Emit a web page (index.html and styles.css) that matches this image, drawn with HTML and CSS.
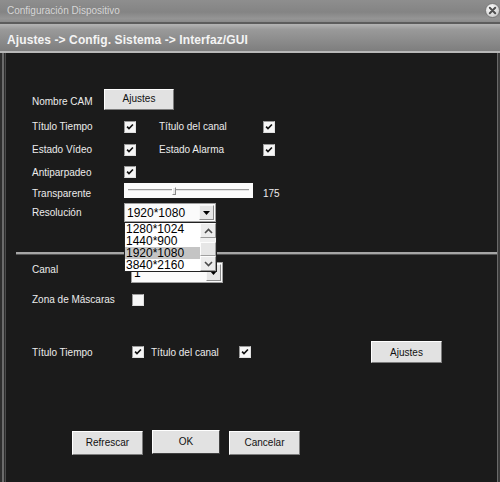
FILE: index.html
```html
<!DOCTYPE html>
<html>
<head>
<meta charset="utf-8">
<link rel="stylesheet" href="styles.css">
</head>
<body>
<div class="window">
  <div class="titlebar">
    <span class="title">Configuración Dispositivo</span>
    <svg class="close" width="15" height="15" viewBox="0 0 15 15">
      <defs>
        <radialGradient id="cg" cx="0.4" cy="0.35" r="0.7">
          <stop offset="0" stop-color="#ffffff"/>
          <stop offset="1" stop-color="#c8c8c8"/>
        </radialGradient>
      </defs>
      <circle cx="7.5" cy="7.5" r="7" fill="url(#cg)" stroke="#6a6a6a" stroke-width="0.8"/>
      <path d="M4.8 4.8 L10.2 10.2 M10.2 4.8 L4.8 10.2" stroke="#505050" stroke-width="2" stroke-linecap="round"/>
    </svg>
  </div>
  <div class="header">Ajustes -&gt; Config. Sistema -&gt; Interfaz/GUI</div>
  <div class="content">
    <section class="sec1">
      <div class="row r1">
        <span class="lbl w72">Nombre CAM</span>
        <button class="btn b70">Ajustes</button>
      </div>
      <div class="row r2">
        <span class="lbl w92">Título Tiempo</span>
        <span class="cb on"><svg viewBox="0 0 12 12"><path d="M2.5 5.5 L4.8 7.8 L9.5 3"/></svg></span>
        <span class="lbl second">Título del canal</span>
        <span class="cb on"><svg viewBox="0 0 12 12"><path d="M2.5 5.5 L4.8 7.8 L9.5 3"/></svg></span>
      </div>
      <div class="row r3">
        <span class="lbl w92">Estado Vídeo</span>
        <span class="cb on"><svg viewBox="0 0 12 12"><path d="M2.5 5.5 L4.8 7.8 L9.5 3"/></svg></span>
        <span class="lbl second">Estado Alarma</span>
        <span class="cb on"><svg viewBox="0 0 12 12"><path d="M2.5 5.5 L4.8 7.8 L9.5 3"/></svg></span>
      </div>
      <div class="row r4">
        <span class="lbl w92">Antiparpadeo</span>
        <span class="cb on"><svg viewBox="0 0 12 12"><path d="M2.5 5.5 L4.8 7.8 L9.5 3"/></svg></span>
      </div>
      <div class="row r5">
        <span class="lbl w92">Transparente</span>
        <div class="slider"><div class="track"></div><div class="thumb"></div></div>
        <span class="lbl val">175</span>
      </div>
      <div class="row r6">
        <span class="lbl w92">Resolución</span>
        <div class="select res">
          <span class="seltext">1920*1080</span>
          <span class="arrowbtn"><svg width="7" height="4" viewBox="0 0 7 4"><path d="M0 0 H7 L3.5 4 Z" fill="#000"/></svg></span>
          <div class="list">
            <div class="items">
              <div class="item">1280*1024</div>
              <div class="item">1440*900</div>
              <div class="item sel">1920*1080</div>
              <div class="item">3840*2160</div>
            </div>
            <div class="scroll">
              <span class="sbtn"><svg width="9" height="6" viewBox="0 0 9 6"><path d="M1 5 L4.5 1.5 L8 5" fill="none" stroke="#4a4a4a" stroke-width="1.6"/></svg></span>
              <span class="sgap"></span>
              <span class="sthumb"></span>
              <span class="sbtn"><svg width="9" height="6" viewBox="0 0 9 6"><path d="M1 1 L4.5 4.5 L8 1" fill="none" stroke="#4a4a4a" stroke-width="1.6"/></svg></span>
            </div>
          </div>
        </div>
      </div>
    </section>
    <div class="divider"></div>
    <section class="sec2">
      <div class="row c1">
        <span class="lbl w99">Canal</span>
        <div class="select canal">
          <span class="seltext">1</span>
          <span class="arrowbtn tall"><svg width="7" height="4" viewBox="0 0 7 4"><path d="M0 0 H7 L3.5 4 Z" fill="#000"/></svg></span>
        </div>
      </div>
      <div class="row c2">
        <span class="lbl w100">Zona de Máscaras</span>
        <span class="cb"></span>
      </div>
      <div class="row c3">
        <span class="lbl w100">Título Tiempo</span>
        <span class="cb on"><svg viewBox="0 0 12 12"><path d="M2.5 5.5 L4.8 7.8 L9.5 3"/></svg></span>
        <span class="lbl third">Título del canal</span>
        <span class="cb on"><svg viewBox="0 0 12 12"><path d="M2.5 5.5 L4.8 7.8 L9.5 3"/></svg></span>
        <button class="btn b71 push">Ajustes</button>
      </div>
    </section>
    <div class="actions">
      <button class="btn b71">Refrescar</button>
      <button class="btn b68 ok">OK</button>
      <button class="btn b71">Cancelar</button>
    </div>
  </div>
</div>
</body>
</html>
```

FILE: styles.css
```css
* { box-sizing: border-box; }
html, body { margin: 0; padding: 0; }
body {
  width: 500px;
  height: 482px;
  overflow: hidden;
  background: #1b1b1b;
  font-family: "Liberation Sans", Arial, sans-serif;
  font-size: 10px;
}
.window {
  width: 500px;
  height: 482px;
  display: flex;
  flex-direction: column;
}
.titlebar {
  height: 22px;
  flex: none;
  display: flex;
  align-items: center;
  justify-content: space-between;
  padding-left: 7px;
  background: linear-gradient(to bottom, #8e8e8e 0%, #848484 55%, #959595 85%, #8a8a8a 100%);
  border-bottom: 2px solid #5c5c5c;
  height: 24px;
  padding-bottom: 2px;
}
.title {
  color: #d6d6d6;
  font-size: 10px;
}
.close { display: block; flex: none; margin-top: 1px; }
.header {
  flex: none;
  height: 29px;
  padding: 9px 0 0 7px;
  color: #f4f4f4;
  font-weight: bold;
  font-size: 12px;
  letter-spacing: 0.1px;
  background: linear-gradient(to bottom, #b4b4b4 0%, #9a9a9a 20%, #8c8c8c 60%, #7e7e7e 100%);
  border-bottom: 2px solid #b8b8b8;
}
.content {
  flex: 1;
  background: linear-gradient(to right, #2e2e2e 0 2px, #6c6c6c 2px 4px, #2c2c2c 4px 5px, #4a4a4a 5px 6px, #1b1b1b 6px calc(100% - 3px), #6a6a6a calc(100% - 3px) calc(100% - 2px), #3a3a3a calc(100% - 2px));
  color: #ececec;
}
.row {
  display: flex;
  align-items: center;
}
.lbl { flex: none; white-space: nowrap; }
.w72 { width: 72px; }
.w92 { width: 92px; }
.w99 { width: 99px; }
.w100 { width: 100px; }
.second { margin-left: 23px; width: 104px; }
.third { margin-left: 7px; width: 88px; }
.val { margin-left: 10px; }

.sec1 { padding: 36px 0 0 32px; }
.r1 { height: 21px; margin-bottom: 5px; }
.r1 .lbl { padding-top: 3px; }
.r2, .r3 { height: 23px; }
.r4 { height: 22px; }
.r5 { height: 15px; margin-bottom: 5px; }
.r5 .lbl { padding-top: 5px; }
.r6 { height: 19px; }

.cb {
  flex: none;
  width: 12px;
  height: 12px;
  background: #f6f6f6;
  border: 1px solid #9a9a9a;
  border-right-color: #e0e0e0;
  border-bottom-color: #e0e0e0;
  display: block;
}
.cb svg { display: block; width: 10px; height: 10px; }
.cb svg path { fill: none; stroke: #111; stroke-width: 2; }

.btn {
  flex: none;
  font-family: "Liberation Sans", Arial, sans-serif;
  font-size: 10px;
  color: #111;
  background: #e2e2e2;
  border: 1px solid;
  border-color: #ffffff #7c7c7c #7c7c7c #ffffff;
  padding: 0;
  margin: 0;
}
.b70 { width: 70px; height: 21px; padding-bottom: 3px; }
.b71 { width: 71px; height: 22px; }
.b68 { width: 68px; height: 24px; }
.push { margin-left: 120px; }

.slider {
  flex: none;
  width: 129px;
  height: 15px;
  background: #fbfbfb;
  position: relative;
}
.track {
  position: absolute;
  left: 4px;
  right: 4px;
  top: 6px;
  height: 2px;
  border-top: 1px solid #9a9a9a;
  border-bottom: 1px solid #e4e4e4;
}
.thumb {
  position: absolute;
  left: 48px;
  top: 4px;
  width: 4px;
  height: 8px;
  background: #e8e8e8;
  border: 1px solid #8a8a8a;
  border-top-color: #fff;
  border-left-color: #fff;
}

.select {
  flex: none;
  position: relative;
  background: #fbfbfb;
  border: 1px solid #a0a0a0;
  display: flex;
  align-items: center;
  color: #000;
  font-size: 12px;
}
.res { width: 92px; height: 19px; }
.seltext { flex: 1; padding-left: 2px; }
.arrowbtn {
  flex: none;
  width: 15px;
  height: 15px;
  margin-right: 1px;
  background: #e6e6e6;
  border: 1px solid;
  border-color: #f8f8f8 #8a8a8a #8a8a8a #f8f8f8;
  display: flex;
  align-items: center;
  justify-content: center;
}
.arrowbtn.tall { height: 17px; }
.list {
  position: absolute;
  left: -1px;
  top: 18px;
  width: 93px;
  height: 50px;
  background: #fff;
  border: 1px solid #222;
  display: flex;
  z-index: 5;
}
.items { flex: 1; }
.item {
  height: 12px;
  line-height: 12px;
  padding-left: 1px;
  font-size: 12px;
  color: #000;
}
.item.sel { background: #c4c4c4; }
.scroll {
  flex: none;
  width: 16px;
  display: flex;
  flex-direction: column;
  background: #f0f0f0;
}
.sbtn {
  height: 15px;
  flex: none;
  background: #ececec;
  border: 1px solid;
  border-color: #fdfdfd #9a9a9a #9a9a9a #fdfdfd;
  display: flex;
  align-items: center;
  justify-content: center;
}
.sgap { height: 4px; flex: none; }
.sthumb {
  flex: 1;
  background: #e6e6e6;
  border: 1px solid;
  border-color: #fdfdfd #a0a0a0 #a0a0a0 #fdfdfd;
}

.divider {
  margin: 30px 3px 0 16px;
  height: 2px;
  background: #a6a6a6;
  border-bottom: 1px solid #555;
  height: 3px;
}
.sec2 { padding: 7px 0 0 32px; }
.c1 { height: 21px; }
.c1 .lbl { padding-bottom: 6px; }
.canal { width: 92px; height: 21px; }
.c2 { height: 13px; margin-top: 10px; }
.c3 { height: 22px; margin-top: 35px; }

.actions {
  display: flex;
  align-items: center;
  gap: 9px;
  padding-left: 72px;
  margin-top: 66px;
  height: 25px;
}
.actions .b71 { height: 24px; margin-top: 2px; }
.ok { border-color: #ffffff #404040 #404040 #ffffff; }
```
